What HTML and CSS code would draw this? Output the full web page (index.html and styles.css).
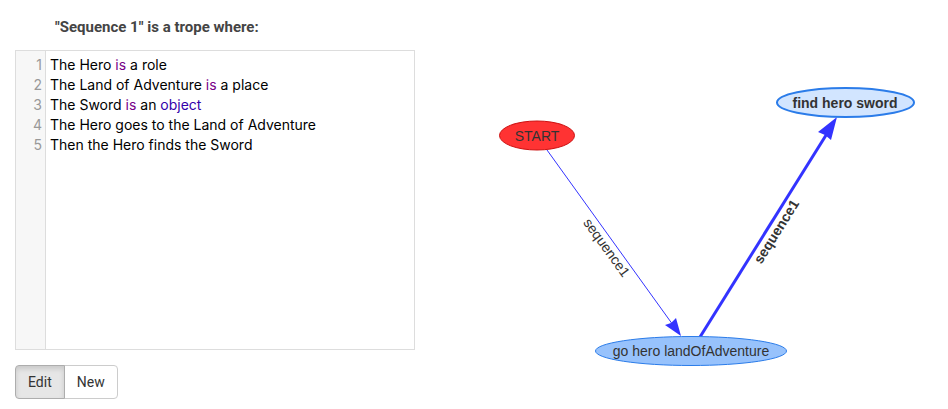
FILE: index.html
```html
<!DOCTYPE html>
<html lang="en">
<head>
<meta charset="utf-8">
<title>Trope editor</title>
<link rel="stylesheet" href="styles.css">
</head>
<body>
<main class="workspace">
  <section class="trope">
    <h1 class="trope-title" id="trope-title">"Sequence 1" is a trope where:</h1>
    <div class="editor">
      <div class="gutter" aria-hidden="true">
        <div>1</div>
        <div>2</div>
        <div>3</div>
        <div>4</div>
        <div>5</div>
      </div>
      <div class="code" role="textbox" aria-multiline="true" aria-labelledby="trope-title" contenteditable="true" spellcheck="false">
        <div>The Hero <span class="keyword">is</span> a role</div>
        <div>The Land of Adventure <span class="keyword">is</span> a place</div>
        <div>The Sword <span class="keyword">is</span> an <span class="atom">object</span></div>
        <div>The Hero goes to the Land of Adventure</div>
        <div>Then the Hero finds the Sword</div>
      </div>
    </div>
    <div class="button-group">
      <button type="button" class="button active" aria-pressed="true">Edit</button>
      <button type="button" class="button">New</button>
    </div>
  </section>
  <svg class="graph" viewBox="445 0 503 400" role="img" aria-label="Sequence graph">
    <line class="edge" x1="547" y1="150" x2="673" y2="325"/>
    <path class="arrow" d="M681 336 665 325 671 323 676 318Z"/>
    <line class="edge selected" x1="700" y1="337" x2="828" y2="132"/>
    <path class="arrow" d="M837 117 818 132 825 135 831 140Z"/>
    <ellipse class="node start" cx="537" cy="135.500" rx="37.500" ry="14.500"/>
    <ellipse class="node" cx="691" cy="351" rx="95.500" ry="14.500"/>
    <ellipse class="node selected" cx="845.500" cy="102.500" rx="68.500" ry="14.500"/>
    <text class="label" x="537" y="141">START</text>
    <text class="label" x="691" y="356">go hero landOfAdventure</text>
    <text class="label selected" x="845" y="108">find hero sword</text>
    <text class="label" transform="translate(606 248) rotate(54)" y="4">sequence1</text>
    <text class="label selected" transform="translate(777 232) rotate(-58)" y="4">sequence1</text>
  </svg>
</main>
</body>
</html>
```
FILE: styles.css
```css
* {
  box-sizing: border-box;
}

body {
  margin: 0;
  background: #fff;
  color: #333;
  font: 14px/20px Roboto, sans-serif;
}

.workspace {
  display: grid;
  grid-template-columns: minmax(0, 400fr) minmax(0, 503fr);
  gap: 30px;
  align-items: start;
  padding-left: 15px;
}

.trope-title {
  margin: 17px 0 13px 40px;
  color: #444;
  font-size: 15px;
  font-weight: 700;
  line-height: 20px;
}

.editor {
  display: flex;
  min-height: 300px;
  border: 1px solid #ddd;
  font: 14px/20px Inter, sans-serif;
}

.gutter {
  width: 30px;
  padding: 4px 3px 4px 0;
  border-right: 1px solid #ddd;
  background: #f7f7f7;
  color: #999;
  text-align: right;
}

.code {
  flex: 1;
  padding: 4px;
  color: #000;
  outline: none;
}

.keyword {
  color: #708;
}

.atom {
  color: #30a;
}

.button-group {
  display: flex;
  margin-top: 15px;
}

.button {
  padding: 6px 12px;
  border: 1px solid #ccc;
  border-radius: 0 4px 4px 0;
  background: #fff;
  color: #333;
  font: inherit;
}

.button + .button {
  margin-left: -1px;
}

.button.active {
  position: relative;
  z-index: 1;
  border-color: #adadad;
  border-radius: 4px 0 0 4px;
  background: #e6e6e6;
  box-shadow: inset 0 3px 5px rgba(0, 0, 0, 0.125);
}

.graph {
  display: block;
  width: 100%;
  height: auto;
}

.edge {
  stroke: #33f;
  stroke-width: 1px;
}

.edge.selected {
  stroke-width: 3px;
}

.arrow {
  fill: #33f;
}

.node {
  fill: #97c2fc;
  stroke: #2b7ce9;
  stroke-width: 1px;
}

.node.start {
  fill: #f33;
  stroke: #c11;
}

.node.selected {
  fill: #d2e5ff;
  stroke-width: 2px;
}

.label {
  fill: #333;
  font: 14px "Liberation Sans", sans-serif;
  text-anchor: middle;
}

.label.selected {
  font-weight: 700;
}
```
